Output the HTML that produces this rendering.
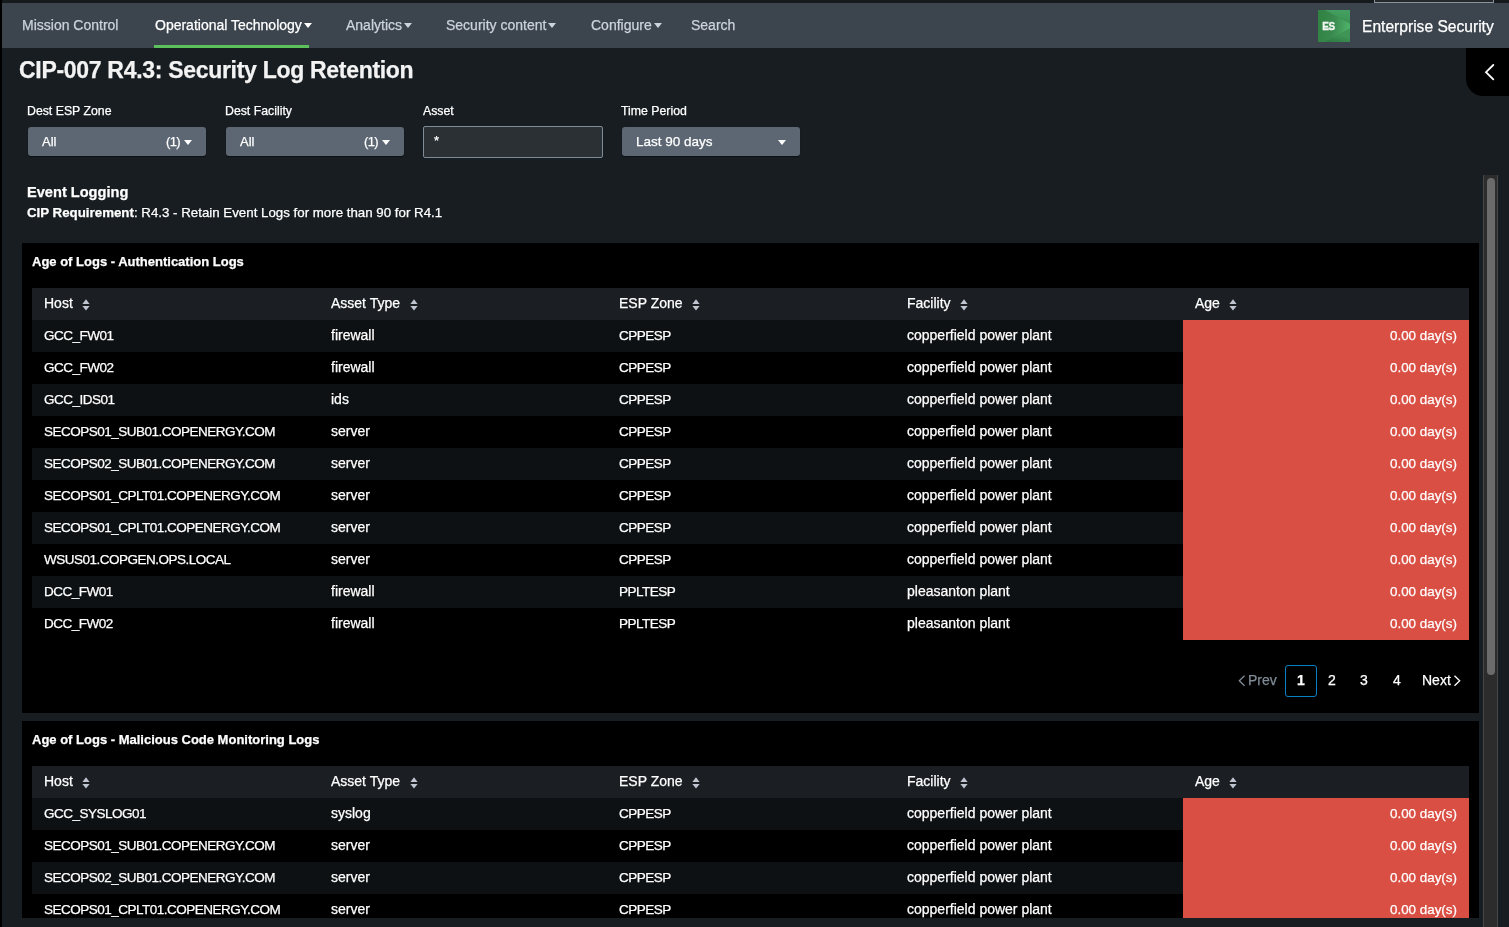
<!DOCTYPE html>
<html><head><meta charset="utf-8">
<style>
*{margin:0;padding:0;box-sizing:border-box}
html,body{-webkit-text-stroke:0.25px currentColor;width:1509px;height:927px;overflow:hidden;background:#171d21;font-family:"Liberation Sans",sans-serif;color:#fff}
.abs{position:absolute}
body>*{will-change:transform}
#lstrip{left:0;top:0;width:2px;height:927px;background:#000}
#nav{left:2px;top:3px;width:1507px;height:45px;background:#3c444d}
.ni{position:absolute;top:17px;font-size:14px;color:#ccd3dc;white-space:nowrap;line-height:16px}
.ni.act{color:#fff}
.car{display:inline-block;width:0;height:0;border-left:4px solid transparent;border-right:4px solid transparent;border-top:5px solid currentColor;vertical-align:middle;margin-left:2px;position:relative;top:-1px}
#green{left:154px;top:45px;width:155px;height:3px;background:#5cc05c}
#topbox{left:1374px;top:-2px;width:120px;height:5px;background:#25292c;border:1px solid #8a949e;border-top:none}
#topstrip{left:0;top:0;width:1509px;height:3px;background:#161a1d}
#logo{left:1318px;top:10px;width:32px;height:32px;background:#2f9a4b;overflow:hidden}
#estext{left:1362px;top:17.5px;font-size:15.6px;color:#fff;white-space:nowrap}
#title{left:19px;top:57px;font-size:23px;font-weight:bold;color:#f3f3f3;white-space:nowrap;letter-spacing:-0.3px}
#sidetab{left:1466px;top:48px;width:43px;height:48px;background:#000;border-bottom-left-radius:17px}
.lbl{position:absolute;top:104px;font-size:12.3px;color:#fff;white-space:nowrap}
.dd{position:absolute;top:127px;width:178px;height:29px;background:#5c6773;border-radius:3px;box-shadow:0 1px 1px rgba(0,0,0,0.45);font-size:13px;color:#fff}
.dd .v{position:absolute;left:14px;top:7px}
.dd .cnt{position:absolute;right:26px;top:7px;letter-spacing:-0.6px}
.dd .ct{position:absolute;right:14px;top:13px;width:0;height:0;border-left:4px solid transparent;border-right:4px solid transparent;border-top:5px solid #fff}
#asset{position:absolute;left:423px;top:126px;width:180px;height:32px;background:#2b3034;border:1px solid #7f8b97;border-radius:2px;font-size:13px}
#evlog{left:27px;top:184px;font-size:14.6px;font-weight:bold;white-space:nowrap}
#cipreq{left:27px;top:205px;font-size:13.3px;white-space:nowrap}
#scroll{left:1483px;top:175px;width:15px;height:752px;background:#2c2c2c;border-left:1px solid #474747;border-right:1px solid #474747}
#thumb{left:1487px;top:178px;width:8px;height:497px;background:#6b6b6b;border-radius:4px}
.panel{position:absolute;left:22px;width:1457px;background:#000}
.ptitle{position:absolute;left:10px;top:11px;font-size:13px;font-weight:bold;white-space:nowrap}
table{position:absolute;left:10px;border-collapse:collapse;width:1437px;table-layout:fixed}
th,td{height:32px;padding:0 0 2px 12px;text-align:left;font-size:14px;white-space:nowrap;font-weight:normal}
th{background:#1b1f23}
tr.o td{background:#0e1114}
tr.e td{background:#000}
td.age{background:#d94f44 !important;text-align:right;padding-right:12px;font-size:13.4px}
.uc{font-size:13.5px;letter-spacing:-0.5px}
.sort{margin-left:9.5px;vertical-align:-3px}
.pg{position:absolute;top:664px;height:32px;font-size:14px;line-height:32px;color:#fff}
</style></head><body>
<div id="topstrip" class="abs"></div>
<div id="lstrip" class="abs"></div>
<div id="nav" class="abs"></div>
<div class="ni" style="left:22px">Mission Control</div>
<div class="ni act" style="left:155px">Operational Technology<span class="car"></span></div>
<div class="ni" style="left:346px">Analytics<span class="car"></span></div>
<div class="ni" style="left:446px">Security content<span class="car"></span></div>
<div class="ni" style="left:591px">Configure<span class="car"></span></div>
<div class="ni" style="left:691px">Search</div>
<div id="green" class="abs"></div>
<div id="topbox" class="abs"></div>
<div id="logo" class="abs"><svg width="32" height="32"><defs><linearGradient id="lg1" x1="0" y1="0" x2="1" y2="0.15"><stop offset="0" stop-color="#2f8241"/><stop offset="0.55" stop-color="#3a8a4f"/><stop offset="1" stop-color="#4db068"/></linearGradient><linearGradient id="lg2" x1="0" y1="1" x2="0.3" y2="0"><stop offset="0" stop-color="#368c4e"/><stop offset="1" stop-color="#44a060"/></linearGradient><linearGradient id="lg3" x1="0.2" y1="1" x2="0.5" y2="0.4"><stop offset="0" stop-color="#2e7a42"/><stop offset="1" stop-color="#3f9556"/></linearGradient></defs><rect width="32" height="32" fill="#348648"/><polygon points="0,0 7,0 32,13.5 32,18.5 7,32 0,32" fill="url(#lg1)"/><polygon points="7,0 32,0 32,13.5" fill="url(#lg2)"/><polygon points="7,32 32,18.5 32,32" fill="url(#lg3)"/><text x="4.2" y="19.8" fill="#f2f7f3" stroke="#f2f7f3" stroke-width="0.35" style="font:bold 10px &quot;Liberation Sans&quot;;letter-spacing:-0.4px;-webkit-text-stroke:0">ES</text></svg></div>
<div id="estext" class="abs">Enterprise Security</div>
<div id="title" class="abs">CIP-007 R4.3: Security Log Retention</div>
<div id="sidetab" class="abs"><svg width="43" height="48" style="position:absolute;left:0;top:0"><polyline points="27.3,17 20,24.2 27.3,31.4" fill="none" stroke="#fff" stroke-width="1.8" stroke-linecap="round"/></svg></div>

<div class="lbl" style="left:27px">Dest ESP Zone</div>
<div class="lbl" style="left:225px">Dest Facility</div>
<div class="lbl" style="left:423px">Asset</div>
<div class="lbl" style="left:621px">Time Period</div>
<div class="dd" style="left:28px"><span class="v">All</span><span class="cnt">(1)</span><span class="ct"></span></div>
<div class="dd" style="left:226px"><span class="v">All</span><span class="cnt">(1)</span><span class="ct"></span></div>
<div id="asset"><span style="position:absolute;left:10px;top:6px">*</span></div>
<div class="dd" style="left:622px"><span class="v" style="font-size:13.5px;top:6.5px">Last 90 days</span><span class="ct" style="right:14px"></span></div>

<div id="evlog" class="abs">Event Logging</div>
<div id="cipreq" class="abs"><b>CIP Requirement</b>: R4.3 - Retain Event Logs for more than 90 for R4.1</div>

<div class="panel" style="top:243px;height:470px">
<div class="ptitle">Age of Logs - Authentication Logs</div>
<table style="top:45px">
<colgroup><col style="width:287px"><col style="width:288px"><col style="width:288px"><col style="width:288px"><col style="width:286px"></colgroup>
<tr><th>Host<svg class="sort" width="8" height="12"><polygon points="0.4,4.9 4,0.2 7.6,4.9" fill="#c0c6d0"/><polygon points="0.4,6.9 4,11.6 7.6,6.9" fill="#c0c6d0"/></svg></th><th>Asset Type<svg class="sort" width="8" height="12"><polygon points="0.4,4.9 4,0.2 7.6,4.9" fill="#c0c6d0"/><polygon points="0.4,6.9 4,11.6 7.6,6.9" fill="#c0c6d0"/></svg></th><th>ESP Zone<svg class="sort" width="8" height="12"><polygon points="0.4,4.9 4,0.2 7.6,4.9" fill="#c0c6d0"/><polygon points="0.4,6.9 4,11.6 7.6,6.9" fill="#c0c6d0"/></svg></th><th>Facility<svg class="sort" width="8" height="12"><polygon points="0.4,4.9 4,0.2 7.6,4.9" fill="#c0c6d0"/><polygon points="0.4,6.9 4,11.6 7.6,6.9" fill="#c0c6d0"/></svg></th><th>Age<svg class="sort" width="8" height="12"><polygon points="0.4,4.9 4,0.2 7.6,4.9" fill="#c0c6d0"/><polygon points="0.4,6.9 4,11.6 7.6,6.9" fill="#c0c6d0"/></svg></th></tr>
<tr class="o"><td class="uc">GCC_FW01</td><td>firewall</td><td class="uc">CPPESP</td><td>copperfield power plant</td><td class="age">0.00 day(s)</td></tr>
<tr class="e"><td class="uc">GCC_FW02</td><td>firewall</td><td class="uc">CPPESP</td><td>copperfield power plant</td><td class="age">0.00 day(s)</td></tr>
<tr class="o"><td class="uc">GCC_IDS01</td><td>ids</td><td class="uc">CPPESP</td><td>copperfield power plant</td><td class="age">0.00 day(s)</td></tr>
<tr class="e"><td class="uc">SECOPS01_SUB01.COPENERGY.COM</td><td>server</td><td class="uc">CPPESP</td><td>copperfield power plant</td><td class="age">0.00 day(s)</td></tr>
<tr class="o"><td class="uc">SECOPS02_SUB01.COPENERGY.COM</td><td>server</td><td class="uc">CPPESP</td><td>copperfield power plant</td><td class="age">0.00 day(s)</td></tr>
<tr class="e"><td class="uc">SECOPS01_CPLT01.COPENERGY.COM</td><td>server</td><td class="uc">CPPESP</td><td>copperfield power plant</td><td class="age">0.00 day(s)</td></tr>
<tr class="o"><td class="uc">SECOPS01_CPLT01.COPENERGY.COM</td><td>server</td><td class="uc">CPPESP</td><td>copperfield power plant</td><td class="age">0.00 day(s)</td></tr>
<tr class="e"><td class="uc">WSUS01.COPGEN.OPS.LOCAL</td><td>server</td><td class="uc">CPPESP</td><td>copperfield power plant</td><td class="age">0.00 day(s)</td></tr>
<tr class="o"><td class="uc">DCC_FW01</td><td>firewall</td><td class="uc">PPLTESP</td><td>pleasanton plant</td><td class="age">0.00 day(s)</td></tr>
<tr class="e"><td class="uc">DCC_FW02</td><td>firewall</td><td class="uc">PPLTESP</td><td>pleasanton plant</td><td class="age">0.00 day(s)</td></tr>
</table>
</div>
<svg class="abs" style="left:1238px;top:675px" width="8" height="12"><polyline points="6.5,0.8 1.3,5.8 6.5,10.8" fill="none" stroke="#808b97" stroke-width="1.3"/></svg>
<div class="pg" style="left:1248px;color:#808b97">Prev</div>
<div class="pg" style="top:665px;left:1285px;width:32px;border:1px solid #0a80c4;border-radius:3px;text-align:center;font-weight:bold;line-height:28px">1</div>
<div class="pg" style="left:1328px">2</div>
<div class="pg" style="left:1360px">3</div>
<div class="pg" style="left:1393px">4</div>
<div class="pg" style="left:1422px">Next</div>
<svg class="abs" style="left:1453px;top:675px" width="8" height="12"><polyline points="1.5,0.8 6.7,5.8 1.5,10.8" fill="none" stroke="#fff" stroke-width="1.3"/></svg>
<div class="panel" style="top:721px;height:197px;overflow:hidden">
<div class="ptitle">Age of Logs - Malicious Code Monitoring Logs</div>
<table style="top:45px">
<colgroup><col style="width:287px"><col style="width:288px"><col style="width:288px"><col style="width:288px"><col style="width:286px"></colgroup>
<tr><th>Host<svg class="sort" width="8" height="12"><polygon points="0.4,4.9 4,0.2 7.6,4.9" fill="#c0c6d0"/><polygon points="0.4,6.9 4,11.6 7.6,6.9" fill="#c0c6d0"/></svg></th><th>Asset Type<svg class="sort" width="8" height="12"><polygon points="0.4,4.9 4,0.2 7.6,4.9" fill="#c0c6d0"/><polygon points="0.4,6.9 4,11.6 7.6,6.9" fill="#c0c6d0"/></svg></th><th>ESP Zone<svg class="sort" width="8" height="12"><polygon points="0.4,4.9 4,0.2 7.6,4.9" fill="#c0c6d0"/><polygon points="0.4,6.9 4,11.6 7.6,6.9" fill="#c0c6d0"/></svg></th><th>Facility<svg class="sort" width="8" height="12"><polygon points="0.4,4.9 4,0.2 7.6,4.9" fill="#c0c6d0"/><polygon points="0.4,6.9 4,11.6 7.6,6.9" fill="#c0c6d0"/></svg></th><th>Age<svg class="sort" width="8" height="12"><polygon points="0.4,4.9 4,0.2 7.6,4.9" fill="#c0c6d0"/><polygon points="0.4,6.9 4,11.6 7.6,6.9" fill="#c0c6d0"/></svg></th></tr>
<tr class="o"><td class="uc">GCC_SYSLOG01</td><td>syslog</td><td class="uc">CPPESP</td><td>copperfield power plant</td><td class="age">0.00 day(s)</td></tr>
<tr class="e"><td class="uc">SECOPS01_SUB01.COPENERGY.COM</td><td>server</td><td class="uc">CPPESP</td><td>copperfield power plant</td><td class="age">0.00 day(s)</td></tr>
<tr class="o"><td class="uc">SECOPS02_SUB01.COPENERGY.COM</td><td>server</td><td class="uc">CPPESP</td><td>copperfield power plant</td><td class="age">0.00 day(s)</td></tr>
<tr class="e"><td class="uc">SECOPS01_CPLT01.COPENERGY.COM</td><td>server</td><td class="uc">CPPESP</td><td>copperfield power plant</td><td class="age">0.00 day(s)</td></tr>
</table>
</div>
<div id="scroll" class="abs"></div>
<div id="thumb" class="abs"></div>
</body></html>
